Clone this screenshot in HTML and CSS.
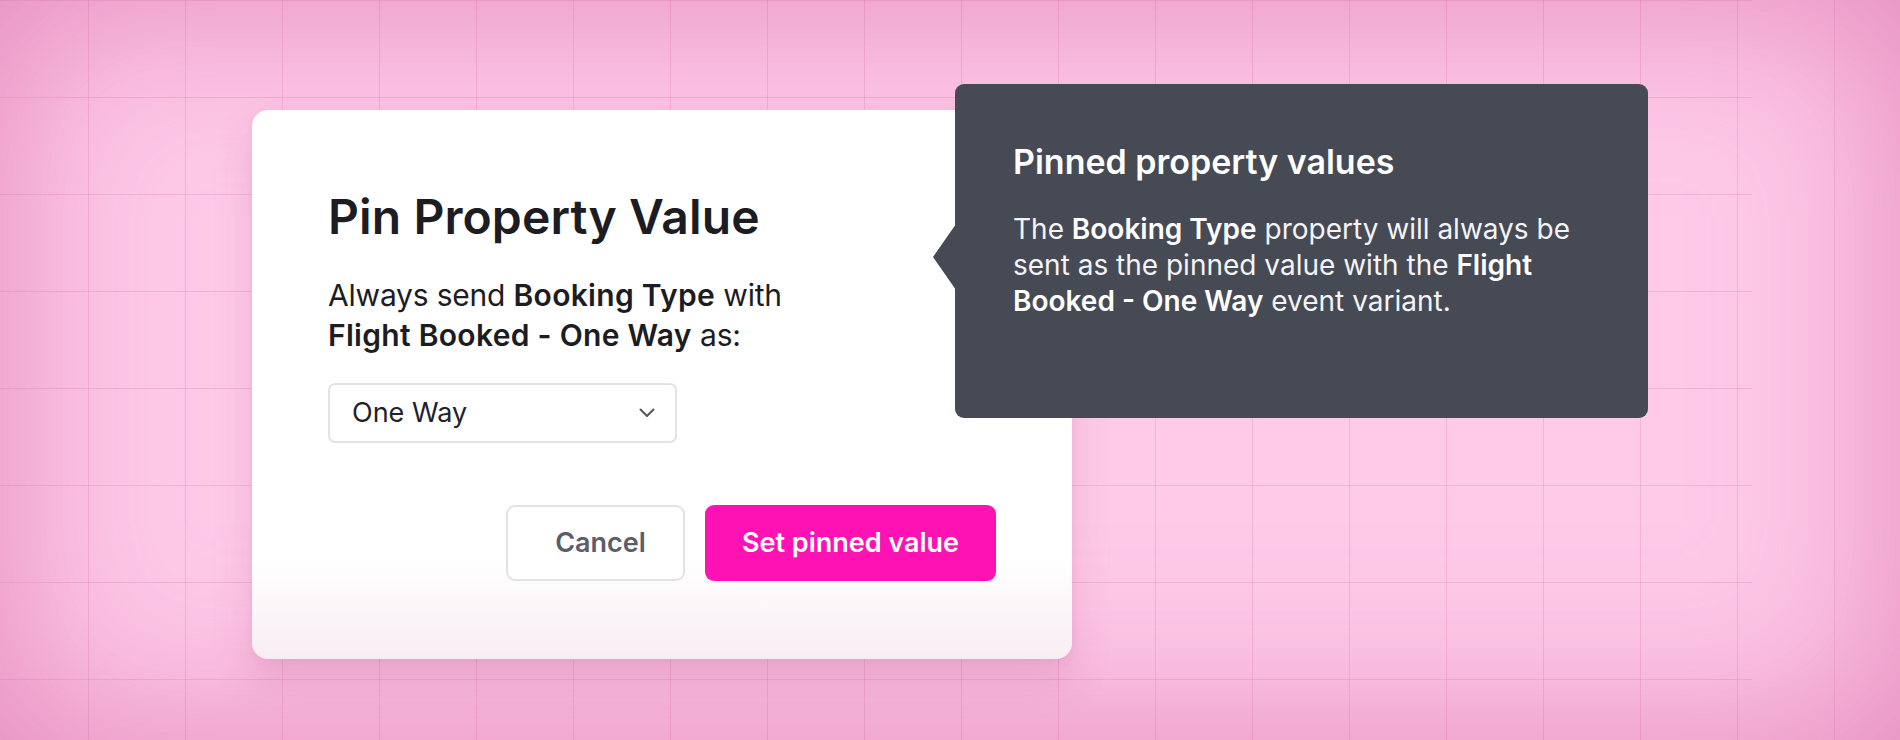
FILE: index.html
```html
<!DOCTYPE html>
<html lang="en">
<head>
<meta charset="utf-8">
<title>Pin Property Value</title>
<link rel="stylesheet" href="styles.css">
</head>
<body>
<div class="stage">
  <div class="modal">
    <h1 class="modal-title">Pin Property Value</h1>
    <p class="modal-text">Always send <b>Booking Type</b> with<br><b>Flight Booked - One Way</b> as:</p>
    <div class="select">
      <span class="select-value">One Way</span>
      <svg class="chevron" width="16" height="10" viewBox="0 0 16 10"><path d="M1.5 1.5 L8 8 L14.5 1.5" fill="none" stroke="#55555f" stroke-width="2" stroke-linecap="round" stroke-linejoin="round"/></svg>
    </div>
    <div class="actions">
      <button class="btn btn-cancel">Cancel</button>
      <button class="btn btn-primary">Set pinned value</button>
    </div>
  </div>
  <div class="tooltip">
    <h2 class="tooltip-title">Pinned property values</h2>
    <p class="tooltip-text">The <b>Booking Type</b> property will always be<br>sent as the pinned value with the <b>Flight</b><br><b>Booked - One Way</b> event variant.</p>
  </div>
</div>
</body>
</html>
```

FILE: styles.css
```css
* { box-sizing: border-box; }

html, body {
  margin: 0;
  padding: 0;
  width: 1900px;
  height: 740px;
  overflow: hidden;
}

body {
  font-family: Inter, "Noto Sans", "Liberation Sans", sans-serif;
}

.stage {
  position: relative;
  width: 1900px;
  height: 740px;
  padding: 110px 0 0 252px;
  display: flex;
  align-items: flex-start;
  background-color: #fecae8;
  background-image:
    linear-gradient(to right, rgba(218, 128, 178, 0.3) 0 1px, transparent 1px),
    linear-gradient(to bottom, rgba(218, 128, 178, 0.3) 0 1px, transparent 1px);
  background-size: 97px 100%, 1752px 97px;
  background-position: 88px 0, 0 0;
  background-repeat: repeat-x, repeat-y;
  box-shadow: inset 0 0 170px 12px rgba(214, 96, 160, 0.58);
}

.modal {
  width: 820px;
  height: 549px;
  padding: 79px 76px 76px;
  border-radius: 16px;
  background: linear-gradient(to bottom, #ffffff 82%, #f8edf3 100%);
  box-shadow: 0 22px 40px rgba(170, 50, 120, 0.16), 0 4px 10px rgba(170, 50, 120, 0.06);
  display: flex;
  flex-direction: column;
  color: #1c1c22;
}

.modal-title {
  margin: 0;
  font-size: 48px;
  line-height: 56px;
  font-weight: 600;
  letter-spacing: 0.1px;
}

.modal-text {
  margin: 30px 0 0;
  font-size: 30px;
  line-height: 40px;
  font-weight: 400;
  letter-spacing: -0.2px;
}

.modal-text b { font-weight: 600; letter-spacing: 0.3px; }

.select {
  margin-top: 28px;
  width: 349px;
  height: 60px;
  border: 2px solid #e2e2e9;
  border-radius: 7px;
  display: flex;
  align-items: center;
  justify-content: space-between;
  padding: 0 20px 0 22px;
}

.select-value {
  font-size: 27px;
  line-height: 32px;
  color: #222228;
}

.chevron { display: block; }

.actions {
  margin-top: 62px;
  display: flex;
  justify-content: flex-end;
  gap: 20px;
}

.btn {
  font-family: inherit;
  height: 76px;
  border-radius: 9px;
  font-size: 27px;
  font-weight: 600;
  line-height: 32px;
  cursor: pointer;
}

.btn-cancel {
  width: 179px;
  background: #fff;
  border: 2px solid #e2e2e9;
  color: #5c5c6a;
  padding: 0 0 0 10px;
}

.btn-primary {
  width: 291px;
  background: #ff12b4;
  border: none;
  color: #fff;
}

.tooltip {
  position: absolute;
  left: 955px;
  top: 84px;
  width: 693px;
  height: 334px;
  background: #454a55;
  border-radius: 9px;
  padding: 58px 30px 0 58px;
  color: #f4f4f6;
}

.tooltip::before {
  content: "";
  position: absolute;
  left: -22px;
  top: 140px;
  width: 23px;
  height: 66px;
  background: #454a55;
  clip-path: polygon(100% 0, 0 50%, 100% 100%);
}

.tooltip-title {
  margin: 0;
  font-size: 34px;
  line-height: 40px;
  font-weight: 600;
  color: #ffffff;
}

.tooltip-text {
  margin: 29px 0 0;
  font-size: 28px;
  line-height: 36px;
  font-weight: 400;
}

.tooltip-text b { font-weight: 600; color: #fff; }
```
